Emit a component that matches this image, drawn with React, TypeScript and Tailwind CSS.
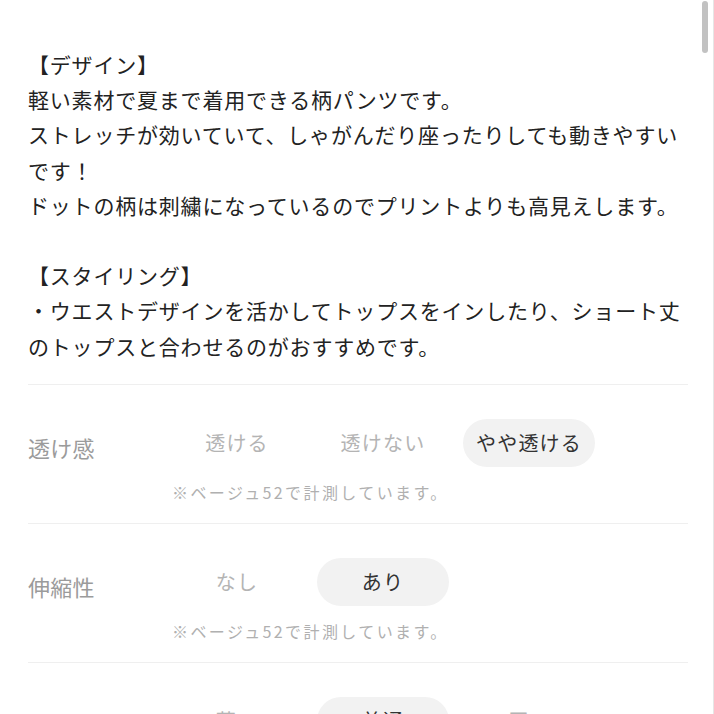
const body = [
  "【デザイン】",
  "軽い素材で夏まで着用できる柄パンツです。",
  "ストレッチが効いていて、しゃがんだり座ったりしても動きやすいです！",
  "ドットの柄は刺繍になっているのでプリントよりも高見えします。",
  "",
  "【スタイリング】",
  "・ウエストデザインを活かしてトップスをインしたり、ショート丈のトップスと合わせるのがおすすめです。",
];

type Spec = {
  label: string;
  options: string[];
  selected: number;
  note?: string;
};

const specs: Spec[] = [
  { label: "透け感", options: ["透ける", "透けない", "やや透ける"], selected: 2, note: "※ベージュ52で計測しています。" },
  { label: "伸縮性", options: ["なし", "あり"], selected: 1, note: "※ベージュ52で計測しています。" },
  { label: "厚さ", options: ["薄い", "普通", "厚い"], selected: 1, note: "※ベージュ52で計測しています。" },
];

function SpecRow({ spec }: { spec: Spec }) {
  return (
    <div className="border-t border-[#efefef] pt-[34px] pb-[19px]">
      <div className="flex">
        <div className="flex h-[48px] w-[136px] shrink-0 translate-y-[5px] items-center text-[22px] tracking-[0.3px] text-[#9b9b9b]">
          {spec.label}
        </div>
        <div className="grid grid-cols-[146px_146px_146px]">
          {spec.options.map((opt, i) => (
            <div
              key={opt}
              className={
                i === spec.selected
                  ? "mx-[7px] flex h-[48px] items-center justify-center rounded-full bg-[#f2f2f2] text-[20px] tracking-[1.2px] text-[#333333]"
                  : "mx-[7px] flex h-[48px] items-center justify-center rounded-full text-[20px] tracking-[1.2px] text-[#b4b4b4]"
              }
            >
              {opt}
            </div>
          ))}
        </div>
      </div>
      {spec.note && (
        <p className="mt-[13px] pl-[144px] text-[16px] leading-[24px] tracking-[2.4px] text-[#b0b0b0]">
          {spec.note}
        </p>
      )}
    </div>
  );
}

export default function App() {
  return (
    <main
      className="relative h-screen overflow-hidden border-r border-[#e6e6e6] bg-white"
      style={{ fontFamily: '"Noto Sans CJK JP", "Noto Sans", sans-serif' }}
    >
      <div className="w-[688px] pl-[28px] pt-[47px]">
        <div className="text-[21px] leading-[35.2px] tracking-[0.8px] text-[#222222]">
          {body.map((line, i) =>
            line ? <p key={i}>{line}</p> : <div key={i} className="h-[35.2px]" />
          )}
        </div>

        <div className="mt-[20px]">
          {specs.map((s) => (
            <SpecRow key={s.label} spec={s} />
          ))}
        </div>
      </div>

      <div className="absolute right-[5px] top-[1px] h-[52px] w-[6px] rounded-full bg-[#c2c2c2]" />
    </main>
  );
}
